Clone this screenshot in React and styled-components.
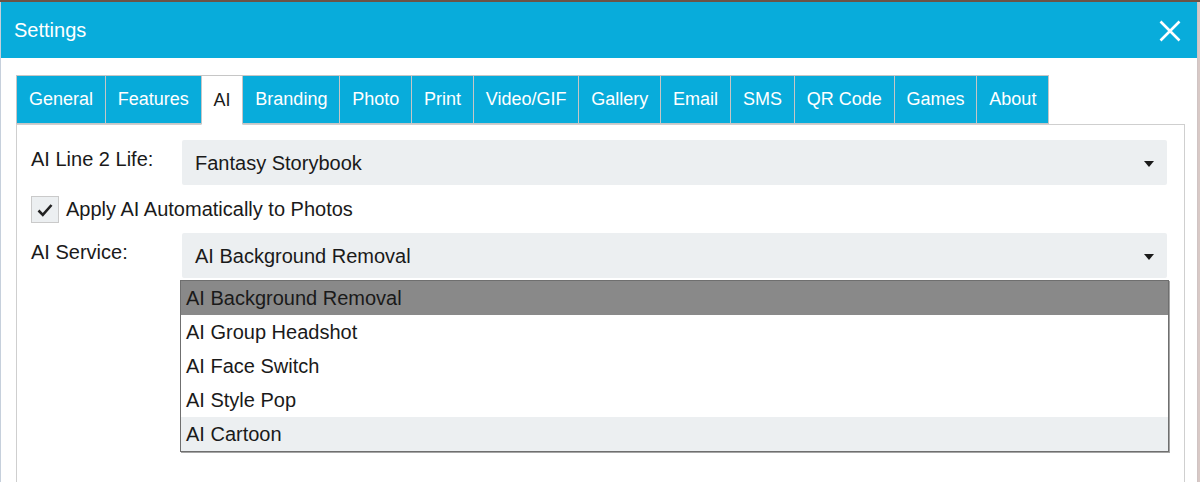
import React, { useState } from "react";
import styled, { createGlobalStyle } from "styled-components";

const GlobalStyle = createGlobalStyle`
  html, body {
    margin: 0;
    padding: 0;
    background: #d8c9c6;
    font-family: "Liberation Sans", Arial, sans-serif;
  }
  body {
    border-top: 2px solid #6b5346;
  }
`;

const tabs = [
  "General",
  "Features",
  "AI",
  "Branding",
  "Photo",
  "Print",
  "Video/GIF",
  "Gallery",
  "Email",
  "SMS",
  "QR Code",
  "Games",
  "About",
];

const services = [
  "AI Background Removal",
  "AI Group Headshot",
  "AI Face Switch",
  "AI Style Pop",
  "AI Cartoon",
];

const App = () => {
  const [activeTab, setActiveTab] = useState("AI");
  const [autoApply, setAutoApply] = useState(true);
  const [service, setService] = useState(services[0]);
  const [hovered, setHovered] = useState("AI Cartoon");

  return (
    <>
      <GlobalStyle />
      <Window>
        <TitleBar>
          <Title>Settings</Title>
          <CloseButton aria-label="Close">
            <svg width="22" height="22" viewBox="0 0 22 22">
              <path
                d="M1.5 1.5 L20.5 20.5 M20.5 1.5 L1.5 20.5"
                stroke="#fff"
                strokeWidth="2.6"
                fill="none"
              />
            </svg>
          </CloseButton>
        </TitleBar>

        <Body>
          <TabBar>
            {tabs.map((tab) => (
              <Tab
                key={tab}
                $active={tab === activeTab}
                onClick={() => setActiveTab(tab)}
              >
                {tab}
              </Tab>
            ))}
          </TabBar>

          <Panel>
            <FormRow>
              <Label>AI Line 2 Life:</Label>
              <Select>
                <span>Fantasy Storybook</span>
                <Caret />
              </Select>
            </FormRow>

            <CheckRow onClick={() => setAutoApply(!autoApply)}>
              <CheckBox>
                {autoApply && (
                  <svg width="18" height="16" viewBox="0 0 18 16">
                    <path
                      d="M2.5 8.5 L6.8 12.8 L15.5 3"
                      stroke="#222"
                      strokeWidth="2.6"
                      fill="none"
                    />
                  </svg>
                )}
              </CheckBox>
              <span>Apply AI Automatically to Photos</span>
            </CheckRow>

            <FormRow>
              <Label>AI Service:</Label>
              <SelectWrap>
                <Select>
                  <span>{service}</span>
                  <Caret />
                </Select>
                <Dropdown>
                  {services.map((item) => (
                    <Option
                      key={item}
                      $selected={item === service}
                      $hovered={item === hovered && item !== service}
                      onMouseEnter={() => setHovered(item)}
                      onClick={() => setService(item)}
                    >
                      {item}
                    </Option>
                  ))}
                </Dropdown>
              </SelectWrap>
            </FormRow>
          </Panel>
        </Body>
      </Window>
    </>
  );
};

export default App;

const Window = styled.div`
  width: 1198px;
  height: 480px;
  box-sizing: border-box;
  display: flex;
  flex-direction: column;
  background: #fff;
  border-left: 1px solid #c6d0dc;
  border-right: 1px solid #cfc4c4;
  overflow: hidden;
`;

const TitleBar = styled.div`
  height: 56px;
  flex-shrink: 0;
  display: flex;
  align-items: center;
  justify-content: space-between;
  padding: 0 16px 0 13px;
  background: #08acdb;
`;

const Title = styled.div`
  color: #fff;
  font-size: 20px;
`;

const CloseButton = styled.button`
  display: flex;
  align-items: center;
  justify-content: center;
  padding: 0;
  margin-top: 2px;
  border: none;
  background: transparent;
  cursor: pointer;
`;

const Body = styled.div`
  flex: 1;
  display: flex;
  flex-direction: column;
  padding: 17px 12px 0 15px;
`;

const TabBar = styled.div`
  display: flex;
  position: relative;
  z-index: 1;
  margin-bottom: -1px;
`;

const Tab = styled.div`
  height: 47px;
  display: flex;
  align-items: center;
  padding: 0 11.9px;
  margin-right: -1px;
  font-size: 18px;
  cursor: pointer;
  border: 1px solid #c6c6c6;
  border-bottom-color: ${({ $active }) => ($active ? "#fff" : "#c6c6c6")};
  background: ${({ $active }) => ($active ? "#fff" : "#08acdb")};
  color: ${({ $active }) => ($active ? "#1a1a1a" : "#fff")};
  padding-top: ${({ $active }) => ($active ? "1px" : "0")};
`;

const Panel = styled.div`
  flex: 1;
  display: flex;
  flex-direction: column;
  padding: 15px 17px 0 14px;
  border: 1px solid #cfcfcf;
  border-bottom: none;
`;

const FormRow = styled.div`
  display: grid;
  grid-template-columns: 151px 1fr;
  align-items: start;
`;

const Label = styled.div`
  padding-top: 8px;
  font-size: 20px;
  color: #1a1a1a;
`;

const SelectWrap = styled.div`
  position: relative;
`;

const Select = styled.div`
  height: 45px;
  display: flex;
  align-items: center;
  justify-content: space-between;
  padding: 2px 13px 0 13px;
  background: #eceff1;
  border-radius: 2px;
  font-size: 20px;
  color: #1a1a1a;
  box-sizing: border-box;
`;

const Caret = styled.span`
  width: 0;
  height: 0;
  border-left: 5px solid transparent;
  border-right: 5px solid transparent;
  border-top: 6px solid #1a1a1a;
`;

const CheckRow = styled.label`
  display: flex;
  align-items: center;
  gap: 7px;
  margin: 11px 0 10px;
  font-size: 20px;
  color: #1a1a1a;
  cursor: pointer;
`;

const CheckBox = styled.span`
  width: 28px;
  height: 27px;
  box-sizing: border-box;
  display: flex;
  align-items: center;
  justify-content: center;
  background: #eceff1;
  border: 1px solid #cacaca;
`;

const Dropdown = styled.div`
  position: absolute;
  top: calc(100% + 2px);
  left: -2px;
  right: -2px;
  background: #fff;
  border: 1px solid #6f6f6f;
  box-shadow: 1px 1px 0 #a5a5a5;
`;

const Option = styled.div`
  height: 34px;
  display: flex;
  align-items: center;
  padding: 0 5px;
  font-size: 20px;
  color: #1a1a1a;
  cursor: default;
  background: ${({ $selected, $hovered }) =>
    $selected ? "#898989" : $hovered ? "#eceff1" : "#fff"};
`;
